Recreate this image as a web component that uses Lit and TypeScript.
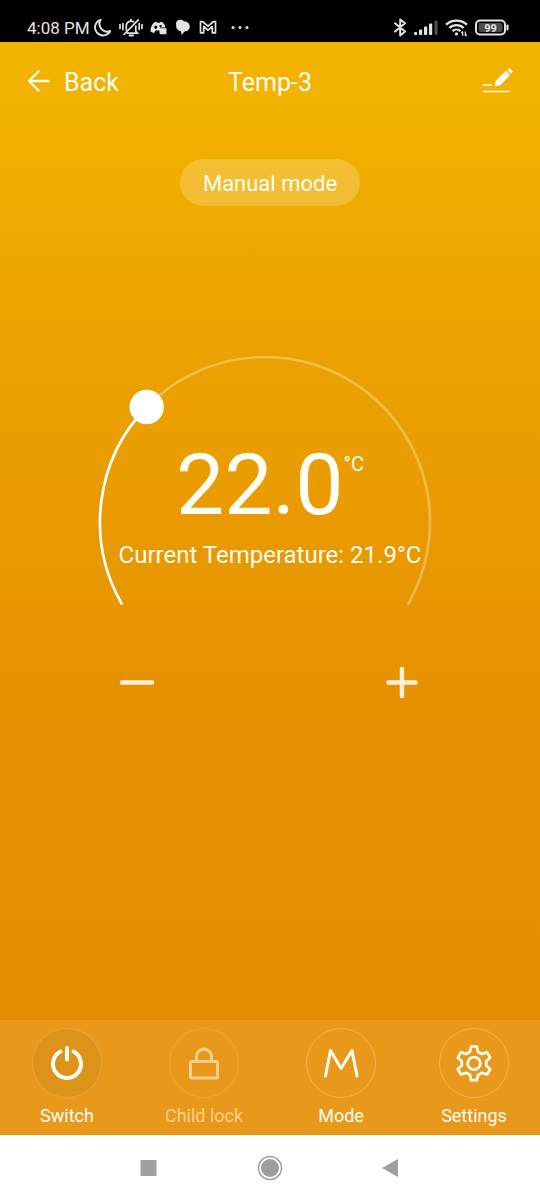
import { LitElement, html, css, svg } from "lit";
import { customElement, property, state } from "lit/decorators.js";
import { classMap } from "lit/directives/class-map.js";

const MIN_TEMP = 5;
const MAX_TEMP = 60;

const CENTER_X = 175;
const CENTER_Y = 182;
const RADIUS = 165;
const START_ANGLE = 150;
const SWEEP = 240;

function pointAt(angle: number) {
  const rad = (angle * Math.PI) / 180;
  return {
    x: CENTER_X + RADIUS * Math.cos(rad),
    y: CENTER_Y + RADIUS * Math.sin(rad),
  };
}

function arcPath(from: number, to: number) {
  const a = pointAt(from);
  const b = pointAt(to);
  const large = to - from > 180 ? 1 : 0;
  return `M${a.x} ${a.y}A${RADIUS} ${RADIUS} 0 ${large} 1 ${b.x} ${b.y}`;
}

@customElement("status-bar")
class StatusBar extends LitElement {
  static styles = css`
    :host {
      display: flex;
      justify-content: space-between;
      align-items: center;
      height: 42px;
      padding: 14px 30px 0 27px;
      box-sizing: border-box;
      background: #000;
      color: #e4e4e4;
      font-size: 17px;
      line-height: 20px;
    }
    .group {
      display: flex;
      align-items: center;
      gap: 7px;
    }
    .time {
      margin-right: -3px;
    }
    svg {
      display: block;
      flex: none;
    }
    .battery-text {
      font-size: 11px;
      font-weight: 700;
    }
  `;

  render() {
    return html`
      <div class="group">
        <span class="time">4:08 PM</span>
        <svg width="18" height="20" viewBox="0 0 18 20" fill="none" stroke="currentColor" stroke-width="1.9" stroke-linejoin="round">
          <path d="M6.600 1.800A8 8 0 1 0 16.200 13A7.800 7.800 0 0 1 6.600 1.800Z" />
        </svg>
        <svg width="24" height="20" viewBox="0 0 24 20" fill="none" stroke="currentColor" stroke-width="1.7" stroke-linecap="round">
          <path d="M8.500 15.200H18.500L16.800 13.200V8M7.300 12V8A4.700 4.700 0 0 1 14.500 3.800M12 1.500V3M5 16.500L19.300 1.800M1 6.500V10.500M3.900 5.500V11.500M20.200 5.500V11.500M23 6.500V10.500" />
          <path d="M10.500 17.500H14" stroke-width="2" />
        </svg>
        <svg width="18" height="20" viewBox="0 0 18 20" fill="currentColor">
          <path fill-rule="evenodd" d="M4 4.500L6.500 3.800L7.200 4.800H9.800L10.500 3.800L13 4.500C14.300 6 15 7.500 15.400 9.500H10V12.500H5.500L4.200 15C2.700 14.700 1.500 14.200.5 13.500C.3 10.500 1.500 7 4 4.500ZM5.800 7.600A1.500 1.600 0 1 0 5.800 10.800A1.500 1.600 0 1 0 5.800 7.600ZM10.600 7A1.300 1 0 1 0 10.600 9A1.300 1 0 1 0 10.600 7Z" />
          <rect x="9.500" y="10.300" width="7" height="6" rx="1" />
        </svg>
        <svg width="16" height="20" viewBox="0 0 16 20" fill="currentColor">
          <path d="M9 3.200C4-.2.200 3.500 1.200 6.500C.5 9.500 2.500 12.800 6 13.300L6.500 17L9.500 13.500C13.500 13 15 10.500 14.800 8.300C14.500 5 12 3.400 9 3.200Z" />
        </svg>
        <svg width="20" height="20" viewBox="0 0 20 20" fill="none" stroke="currentColor" stroke-width="1.700" stroke-linejoin="round">
          <path d="M2.500 3.500H4.500L10 8.200L15.500 3.500H17.500V14.800H14.300V8.500L10 12.200L5.700 8.500V14.800H2.500Z" />
        </svg>
        <svg width="30" height="20" viewBox="0 0 30 20" fill="currentColor">
          <circle cx="8" cy="9.500" r="1.500" /><circle cx="15" cy="9.500" r="1.500" /><circle cx="22" cy="9.500" r="1.500" />
        </svg>
      </div>
      <div class="group">
        <svg width="14" height="20" viewBox="0 0 14 20" fill="none" stroke="currentColor" stroke-width="2" stroke-linejoin="round" stroke-linecap="round">
          <path d="M2 5.200L12 13.500L7.200 17.500V1.500L12 5.200L2 13.500" />
        </svg>
        <svg width="24" height="20" viewBox="0 0 24 20" fill="currentColor">
          <rect x="0" y="14" width="3.200" height="3" rx="1" /><rect x="5" y="11.500" width="3.200" height="5.500" rx="1" />
          <rect x="10" y="8.500" width="3.200" height="8.500" rx="1" /><rect x="15" y="5.500" width="3.200" height="11.500" rx="1" />
          <rect x="20.500" y="2.500" width="3" height="14.500" rx="1" opacity=".35" />
        </svg>
        <svg width="23" height="20" viewBox="0 0 23 20" fill="none" stroke="currentColor" stroke-width="2.300">
          <path d="M1 6.700A15.500 15.500 0 0 1 22 6.700M4.300 10A10.500 10.500 0 0 1 18.700 10M7.500 13.100A6 6 0 0 1 15.500 13.100" />
          <circle cx="11.500" cy="15.900" r="1.600" fill="currentColor" stroke="none" />
          <path stroke-width="1.200" d="M17.700 18V13.500M20.300 13.500V18M16.300 15L17.700 13.500M20.300 18L21.700 16.500" />
        </svg>
        <svg width="35" height="20" viewBox="0 0 35 20">
          <rect x="1" y="2.500" width="29" height="14" rx="4" fill="none" stroke="currentColor" stroke-width="2" />
          <rect x="3.500" y="5" width="24" height="9" rx="2" fill="#4a4a4a" />
          <path d="M32.500 7.500V11.500" stroke="currentColor" stroke-width="2.200" stroke-linecap="round" />
          <text class="battery-text" x="15.500" y="13.500" text-anchor="middle" fill="currentColor">99</text>
        </svg>
      </div>
    `;
  }
}

@customElement("temp-dial")
class TempDial extends LitElement {
  @property({ type: Number }) value = 22;

  static styles = css`
    :host {
      display: grid;
      justify-items: center;
      width: 100%;
    }
    .ring,
    .readout {
      grid-area: 1 / 1;
    }
    .ring {
      display: block;
      width: 360px;
      height: 280px;
    }
    .readout {
      display: flex;
      flex-direction: column;
      align-items: center;
      padding-top: 101px;
    }
    .target {
      display: flex;
      align-items: flex-start;
      font-size: 86px;
      line-height: 88px;
    }
    .unit {
      font-size: 20px;
      line-height: 24px;
      padding-top: 11px;
    }
    .current {
      font-size: 24px;
      line-height: 28px;
      padding-top: 12px;
    }
    .slider-label {
      width: 1px;
      height: 1px;
      overflow: hidden;
      opacity: 0;
    }
  `;

  private onInput(e: Event) {
    const value = Number((e.target as HTMLInputElement).value);
    this.dispatchEvent(new CustomEvent("temp-change", { detail: value }));
  }

  render() {
    const end = START_ANGLE + SWEEP;
    const angle = START_ANGLE + (SWEEP * (this.value - MIN_TEMP)) / (MAX_TEMP - MIN_TEMP);
    const knob = pointAt(angle);
    return html`
      <svg class="ring" viewBox="0 0 360 280" fill="none" stroke-width="2.700" aria-hidden="true">
        ${svg`
          <path d=${arcPath(angle, end)} stroke="#fff" stroke-opacity=".3" />
          <path d=${arcPath(START_ANGLE, angle)} stroke="#fff" />
          <circle cx=${knob.x} cy=${knob.y} r="17.200" fill="#fff" />
        `}
      </svg>
      <div class="readout">
        <div class="target">${this.value.toFixed(1)}<span class="unit">°C</span></div>
        <div class="current">Current Temperature: 21.9°C</div>
        <label class="slider-label">
          <input
            type="range"
            aria-label="Target temperature"
            min=${MIN_TEMP}
            max=${MAX_TEMP}
            step="0.5"
            .value=${String(this.value)}
            @input=${this.onInput}
          />
        </label>
      </div>
    `;
  }
}

const icons = {
  power: svg`<path stroke-width="4" d="M11.500 6.500A14 14 0 1 0 24.500 6.500M18 3V14.500" />`,
  lock: svg`<rect x="4.500" y="16.500" width="27" height="16.500" rx="1.500" stroke-width="3" /><path stroke-width="3" d="M10.500 16.500V11.500A7.500 7.500 0 0 1 25.500 11.500V16.500" />`,
  mode: svg`<path stroke-width="3" d="M2.500 31L7.500 5.500L18 23.500L29 5.500L34 31" />`,
  gear: svg`<path stroke-width="2.700" d="M15.200 1.500H20.800L22 6.800L26 9L31 7.200L34.200 12.600L30.200 16.200V20.600L34.200 24.200L31 29.500L26 27.800L22 30L20.800 35.200H15.200L14 30L10 27.800L5 29.500L1.800 24.200L5.800 20.600V16.200L1.800 12.600L5 7.200L10 9L14 6.800Z" /><circle cx="18" cy="18.400" r="6.300" stroke-width="2.800" />`,
};

@customElement("app-root")
class AppRoot extends LitElement {
  @state() private temp = 22;
  @state() private on = true;

  static styles = css`
    :host {
      display: flex;
      flex-direction: column;
      min-height: 100vh;
      font-family: Roboto, "Liberation Sans", sans-serif;
      color: #fffdf4;
    }
    button {
      display: flex;
      align-items: center;
      justify-content: center;
      margin: 0;
      padding: 0;
      border: 0;
      background: none;
      color: inherit;
      font: inherit;
      cursor: pointer;
    }
    svg {
      display: block;
      fill: none;
      stroke: currentColor;
      stroke-linecap: round;
      stroke-linejoin: round;
    }
    .screen {
      flex: 1;
      display: flex;
      flex-direction: column;
      align-items: center;
      background: linear-gradient(180deg, #f2b400 0%, #f1b100 8%, #eba100 30%, #e89700 50%, #e59000 63%, #e58e00 100%);
    }
    .header {
      align-self: stretch;
      display: grid;
      grid-template-columns: 1fr auto 1fr;
      align-items: center;
      height: 80px;
      padding: 2px 26px 0;
      box-sizing: border-box;
      font-size: 25px;
      line-height: 30px;
    }
    .title {
      margin: 0;
      font-size: 25px;
      font-weight: 400;
    }
    .back {
      justify-self: start;
      gap: 13px;
    }
    .edit {
      justify-self: end;
    }
    .pill {
      margin-top: 37px;
      height: 47px;
      padding: 3px 23px 0;
      box-sizing: border-box;
      border-radius: 24px;
      background: rgba(255, 255, 255, 0.2);
      font-size: 22px;
      line-height: 28px;
    }
    .dial {
      margin-top: 134px;
    }
    .steps {
      display: flex;
      justify-content: space-between;
      width: 100%;
      padding: 0 118px 0 117px;
      margin: 42px 0;
      box-sizing: border-box;
      color: #fff2dc;
    }
    .tabs {
      align-self: stretch;
      display: flex;
      justify-content: space-between;
      margin-top: auto;
      padding: 8px 31px 8px 32px;
      background: #e8991b;
    }
    .tab {
      flex-direction: column;
      gap: 7px;
      font-size: 18px;
      line-height: 22px;
    }
    .tab:disabled {
      color: #f9cf89;
    }
    .disc {
      display: grid;
      place-items: center;
      width: 70px;
      height: 70px;
      box-sizing: border-box;
      border: 1px solid #f3b350;
      border-radius: 50%;
    }
    .tab:disabled .disc {
      border-color: #eda73a;
    }
    .active .disc {
      background: #dd921a;
      border-color: #eaa73c;
    }
    .system {
      display: flex;
      justify-content: center;
      gap: 73px;
      height: 65px;
      background: #fff;
      color: #9e9e9e;
    }
    .key {
      width: 48px;
    }
  `;

  private setTemp(value: number) {
    this.temp = Math.min(MAX_TEMP, Math.max(MIN_TEMP, value));
  }

  private tab(label: string, icon: unknown, active = false, disabled = false, click = () => {}) {
    return html`
      <button class=${classMap({ tab: true, active })} ?disabled=${disabled} @click=${click}>
        <span class="disc"><svg width="36" height="37" viewBox="0 0 36 37">${icon}</svg></span>
        <span>${label}</span>
      </button>
    `;
  }

  render() {
    return html`
      <status-bar></status-bar>
      <main class="screen">
        <header class="header">
          <button class="back">
            <svg width="25" height="26" viewBox="0 0 25 26" stroke-width="2.400">
              <path d="M22.500 11H3M12.500 1.500L3 11L12.500 20.500" />
            </svg>
            Back
          </button>
          <h1 class="title">Temp-3</h1>
          <button class="edit" aria-label="Edit name">
            <svg width="32" height="30" viewBox="0 0 32 30" stroke-width="1.500">
              <path d="M1.500 17H9.500M1.500 23.500H27" />
              <path d="M13.500 17.200L14.200 13.200L24 3.800L27.200 7.200L17.500 16.700Z" fill="currentColor" stroke-width="1.400" />
              <path d="M26 1.900L27.100.9Q27.600.6 28.100 1L30 3Q30.400 3.500 30 4L29 5.100Z" fill="currentColor" stroke-width="1" />
            </svg>
          </button>
        </header>
        <button class="pill">Manual mode</button>
        <temp-dial
          class="dial"
          .value=${this.temp}
          @temp-change=${(e: CustomEvent) => this.setTemp(e.detail)}
        ></temp-dial>
        <div class="steps">
          <button aria-label="Decrease" @click=${() => this.setTemp(this.temp - 0.5)}>
            <svg width="40" height="40" viewBox="0 0 40 40" stroke-width="4.500">
              <path d="M5 20.500H35" />
            </svg>
          </button>
          <button aria-label="Increase" @click=${() => this.setTemp(this.temp + 0.5)}>
            <svg width="40" height="40" viewBox="0 0 40 40" stroke-width="4.500">
              <path d="M6.500 20.500H33.500M20 7V34" />
            </svg>
          </button>
        </div>
        <nav class="tabs">
          ${this.tab("Switch", icons.power, this.on, false, () => (this.on = !this.on))}
          ${this.tab("Child lock", icons.lock, false, true)}
          ${this.tab("Mode", icons.mode)}
          ${this.tab("Settings", icons.gear)}
        </nav>
      </main>
      <footer class="system">
        <button class="key" aria-label="Recent apps">
          <svg width="26" height="26" viewBox="0 0 26 26"><rect x="4.500" y="5" width="16" height="16" rx="1" fill="currentColor" stroke="none" /></svg>
        </button>
        <button class="key" aria-label="Home">
          <svg width="26" height="26" viewBox="0 0 26 26" stroke-width="1.500"><circle cx="13" cy="13" r="11.500" /><circle cx="13" cy="13" r="9" fill="currentColor" stroke="none" /></svg>
        </button>
        <button class="key" aria-label="Go back">
          <svg width="26" height="26" viewBox="0 0 26 26"><path d="M4 13L20 4V22Z" fill="currentColor" stroke="none" /></svg>
        </button>
      </footer>
    `;
  }
}
